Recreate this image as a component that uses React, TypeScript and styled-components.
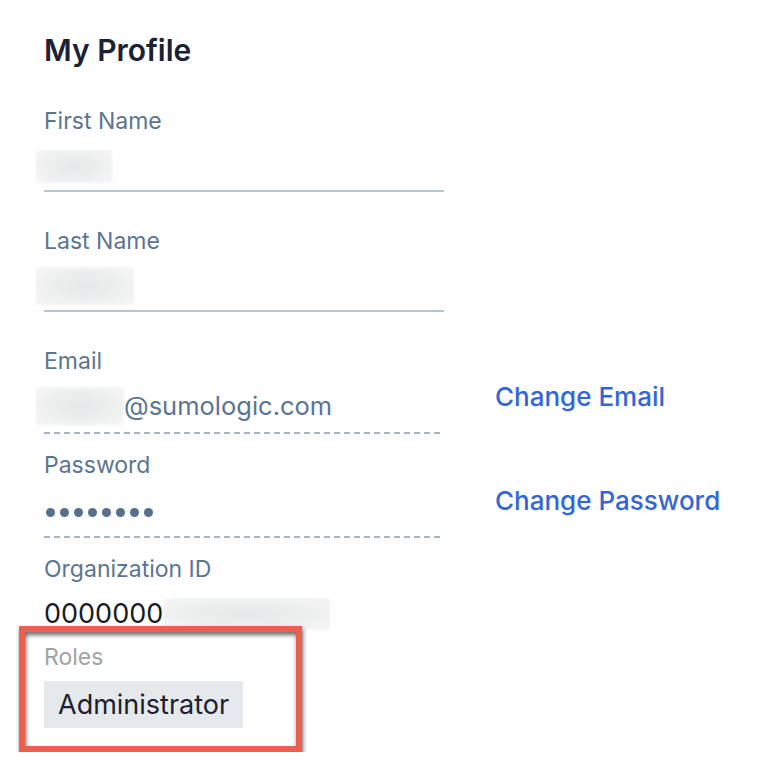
import styled, { createGlobalStyle } from "styled-components";

const GlobalStyle = createGlobalStyle`
  body {
    margin: 0;
    background: #ffffff;
    font-family: Inter, "Noto Sans", sans-serif;
  }
`;

const App = () => {
  return (
    <Page>
      <GlobalStyle />
      <Title>My Profile</Title>

      <Field>
        <Label>First Name</Label>
        <Value $line="solid">
          <Blur $w={76} $h={33} />
        </Value>
      </Field>

      <Field>
        <Label>Last Name</Label>
        <Value $line="solid">
          <Blur $w={98} $h={38} />
        </Value>
      </Field>

      <Row>
        <Field $tight>
          <Label>Email</Label>
          <Value $line="dashed">
            <Blur $w={88} $h={38} />
            <Muted>@sumologic.com</Muted>
          </Value>
        </Field>
        <Link href="#">Change Email</Link>
      </Row>

      <Row>
        <Field $tight>
          <Label>Password</Label>
          <Value $line="dashed">
            <Dots>
              {Array.from({ length: 8 }).map((_, i) => (
                <Dot key={i} />
              ))}
            </Dots>
          </Value>
        </Field>
        <Link href="#">Change Password</Link>
      </Row>

      <Field $tight>
        <Label>Organization ID</Label>
        <Value>
          <Dark>0000000</Dark>
          <Blur $w={167} $h={32} />
        </Value>
      </Field>

      <Highlight>
        <RoleLabel>Roles</RoleLabel>
        <Badge>Administrator</Badge>
      </Highlight>
    </Page>
  );
};

const Page = styled.div`
  padding: 28px 0 0 44px;
  width: 736px;
  box-sizing: border-box;
`;

const Title = styled.h1`
  margin: 0 0 35px;
  font-size: 30px;
  line-height: 44px;
  font-weight: 600;
  color: #1b2234;
`;

const Field = styled.div<{ $tight?: boolean }>`
  width: 400px;
  margin-bottom: ${({ $tight }) => ($tight ? "17px" : "35px")};
`;

const Label = styled.div`
  font-size: 23px;
  line-height: 28px;
  color: #5a7591;
`;

const Value = styled.div<{ $line?: "solid" | "dashed" }>`
  display: flex;
  align-items: center;
  height: 38px;
  padding: 12px 0 5px;
  font-size: 25.5px;
  line-height: 38px;
  border-bottom: ${({ $line }) => ($line === "solid" ? "2px solid #b8c5d5" : "none")};
  ${({ $line }) =>
    $line === "dashed" &&
    `
    background: repeating-linear-gradient(90deg, #a8b5c1 0 6px, transparent 6px 10px) bottom left / 100% 2px no-repeat;
    padding-bottom: 9px;
  `}
`;

const Blur = styled.span<{ $w: number; $h: number }>`
  display: inline-block;
  flex-shrink: 0;
  width: ${({ $w }) => $w}px;
  height: ${({ $h }) => $h}px;
  margin-left: -8px;
  background: radial-gradient(ellipse at center, #e6e7e8 0%, #eeefef 55%, #f7f7f7 100%);
  filter: blur(1px);
`;

const Muted = styled.span`
  color: #5a7591;
`;

const Dark = styled.span`
  font-size: 27px;
  color: #161b26;
  margin-right: 8px;
`;

const Row = styled.div`
  display: flex;
  align-items: flex-start;
  gap: 51px;
`;

const Link = styled.a`
  margin-top: 34px;
  font-size: 26px;
  line-height: 32px;
  font-weight: 500;
  color: #3366d6;
  text-decoration: none;
  white-space: nowrap;
`;

const Dots = styled.div`
  display: flex;
  gap: 5px;
  margin-top: 4px;
  padding-left: 2px;
`;

const Dot = styled.span`
  width: 9px;
  height: 9px;
  border-radius: 50%;
  background: #566f8b;
`;

const Highlight = styled.div`
  position: relative;
  margin: -29px 0 0 -25px;
  width: 283px;
  box-sizing: border-box;
  padding: 17px 25px 24px;

  &::after {
    content: "";
    position: absolute;
    inset: 0;
    border: 6px solid #e9604f;
    filter: drop-shadow(1px 3px 2px rgba(0, 0, 0, 0.6));
    pointer-events: none;
  }
`;

const RoleLabel = styled.div`
  font-size: 23px;
  line-height: 28px;
  color: #a3a3a3;
  margin-bottom: 10px;
`;

const Badge = styled.span`
  display: inline-block;
  padding: 0 14px;
  height: 47px;
  line-height: 47px;
  font-size: 27px;
  color: #1b2130;
  background: #e6e9ec;
`;

export default App;
